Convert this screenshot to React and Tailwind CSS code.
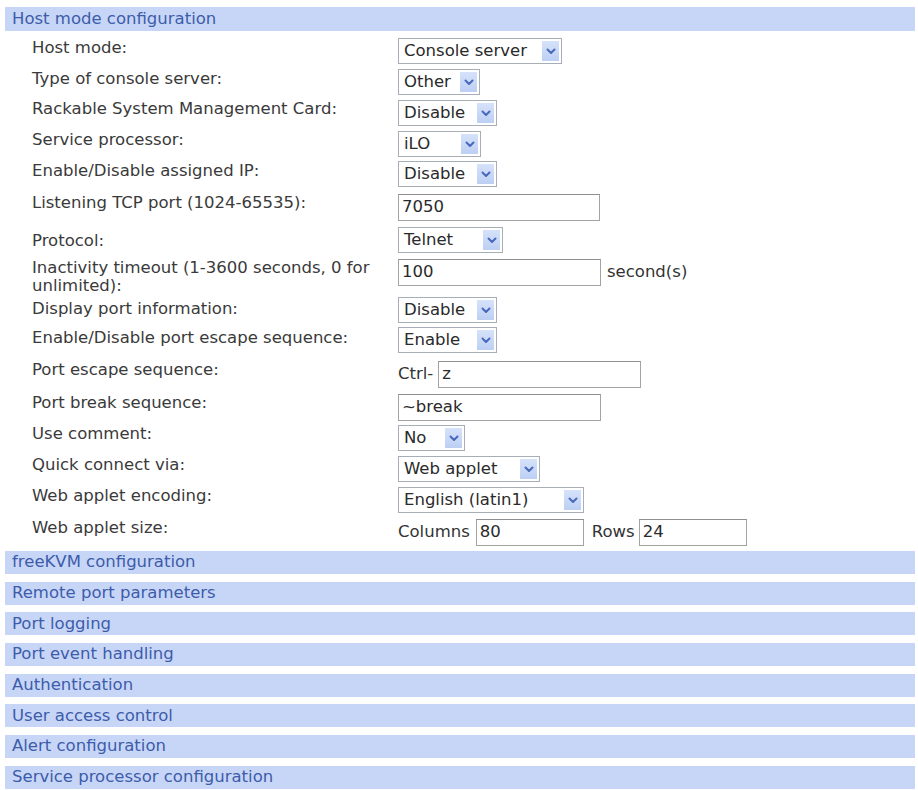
import React from "react";

const FONT = { fontFamily: '"DejaVu Sans", Verdana, sans-serif' };

function Chevron() {
  return (
    <svg width="10" height="7" viewBox="0 0 10 7" className="block">
      <polyline points="1.5,1.5 5,5 8.5,1.5" fill="none" stroke="#4a69bd" strokeWidth="2" strokeLinecap="round" strokeLinejoin="round" />
    </svg>
  );
}

function Select({ text, w }) {
  return (
    <div className={`relative flex h-[26px] items-center border border-[#a8aeb8] bg-white pl-[5px] text-[#2a2a2a] ${w}`}>
      <span className="whitespace-nowrap leading-none">{text}</span>
      <div className="absolute right-[2px] top-[2px] bottom-[2px] flex w-[17px] items-center justify-center bg-gradient-to-b from-[#d6e2fa] to-[#bccff4]">
        <Chevron />
      </div>
    </div>
  );
}

function Input({ value, w }) {
  return (
    <div className={`flex h-[27px] items-center border border-[#a3a3a3] border-t-[#8f8f8f] bg-white pl-[3px] text-[#2a2a2a] ${w}`}>
      <span className="whitespace-nowrap leading-none">{value}</span>
    </div>
  );
}

const rows = [
  { label: "Host mode:", h: "h-[31px]", pt: "pt-[1px]", c: <Select text="Console server" w="w-[164px]" /> },
  { label: "Type of console server:", h: "h-[31px]", pt: "pt-[1px]", c: <Select text="Other" w="w-[82px]" /> },
  { label: "Rackable System Management Card:", h: "h-[31px]", pt: "pt-[0px]", c: <Select text="Disable" w="w-[99px]" /> },
  { label: "Service processor:", h: "h-[30px]", pt: "pt-[0px]", c: <Select text="iLO" w="w-[83px]" /> },
  { label: "Enable/Disable assigned IP:", h: "h-[33px]", pt: "pt-[1px]", c: <Select text="Disable" w="w-[99px]" /> },
  { label: "Listening TCP port (1024-65535):", h: "h-[33px]", pt: "pt-[0px]", c: <Input value="7050" w="w-[202px]" /> },
  { label: "Protocol:", h: "h-[32px]", pt: "pt-[5px]", c: <Select text="Telnet" w="w-[105px]" /> },
  {
    label: (
      <>
        Inactivity timeout (1-3600 seconds, 0 for
        <br />
        unlimited):
      </>
    ),
    h: "h-[38px]",
    pt: "pt-[0px]",
    c: (
      <div className="flex items-center">
        <Input value="100" w="w-[203px]" />
        <span className="ml-[6px] text-[#333]">second(s)</span>
      </div>
    ),
  },
  { label: "Display port information:", h: "h-[30px]", pt: "pt-[3px]", c: <Select text="Disable" w="w-[99px]" /> },
  { label: "Enable/Disable port escape sequence:", h: "h-[34px]", pt: "pt-[2px]", c: <Select text="Enable" w="w-[99px]" /> },
  {
    label: "Port escape sequence:",
    h: "h-[33px]",
    pt: "pt-[0px]",
    c: (
      <div className="flex items-center">
        <span className="mr-[5px] text-[#333]">Ctrl-</span>
        <Input value="z" w="w-[203px]" />
      </div>
    ),
  },
  { label: "Port break sequence:", h: "h-[31px]", pt: "pt-[0px]", c: <Input value="~break" w="w-[203px]" /> },
  { label: "Use comment:", h: "h-[31px]", pt: "pt-[0px]", c: <Select text="No" w="w-[67px]" /> },
  { label: "Quick connect via:", h: "h-[31px]", pt: "pt-[0px]", c: <Select text="Web applet" w="w-[142px]" /> },
  { label: "Web applet encoding:", h: "h-[32px]", pt: "pt-[0px]", c: <Select text="English (latin1)" w="w-[186px]" /> },
  {
    label: "Web applet size:",
    h: "h-[32px]",
    pt: "pt-[0px]",
    c: (
      <div className="flex items-center">
        <span className="mr-[6px] text-[#333]">Columns</span>
        <Input value="80" w="w-[108px]" />
        <span className="ml-[8px] mr-[4px] text-[#333]">Rows</span>
        <Input value="24" w="w-[108px]" />
      </div>
    ),
  },
];

const sections = [
  "freeKVM configuration",
  "Remote port parameters",
  "Port logging",
  "Port event handling",
  "Authentication",
  "User access control",
  "Alert configuration",
  "Service processor configuration",
];

function Bar({ children, h = "h-[23px]" }) {
  return (
    <div className={`flex ${h} w-[910px] items-center bg-[#c7d6f7] pl-[7px] text-[#3d5caa]`}>
      <span className="whitespace-nowrap leading-none">{children}</span>
    </div>
  );
}

export default function App() {
  return (
    <div className="min-h-[790px] w-[918px] bg-white pl-[5px] pt-[7px] text-[16.5px]" style={FONT}>
      <Bar h="h-[24px]">Host mode configuration</Bar>
      <div className="pt-[7px]">
        {rows.map((r, i) => (
          <div key={i} className={`flex ${r.h}`}>
            <div className={`w-[393px] shrink-0 pl-[27px] leading-[18px] text-[#3a3a3a] ${r.pt}`}>
              <div className={typeof r.label === "string" ? "whitespace-nowrap" : ""}>{r.label}</div>
            </div>
            <div>{r.c}</div>
          </div>
        ))}
      </div>
      <div className="flex flex-col gap-[7.7px]">
        {sections.map((s) => (
          <Bar key={s}>{s}</Bar>
        ))}
      </div>
    </div>
  );
}
